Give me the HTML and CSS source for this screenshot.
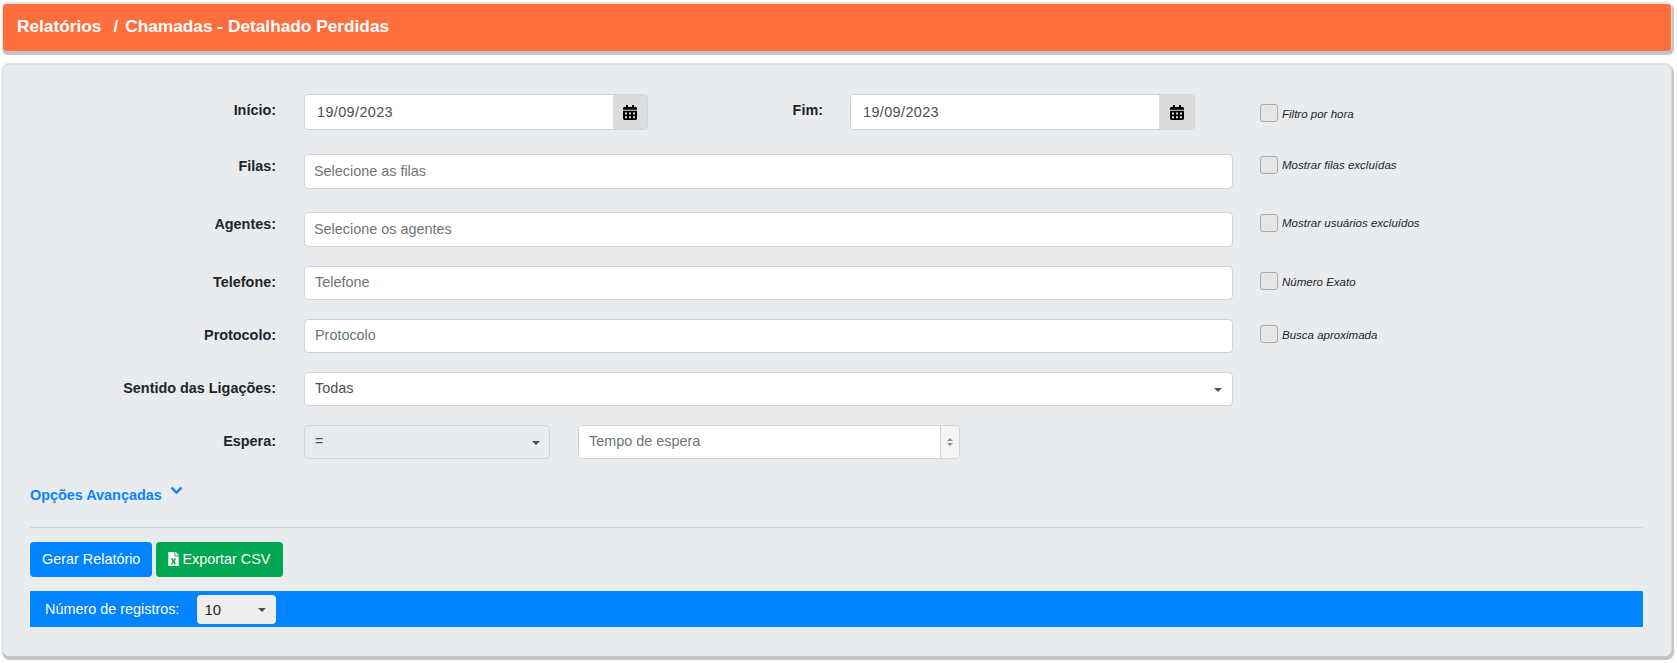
FILE: index.html
```html
<!DOCTYPE html>
<html lang="pt-BR">
<head>
<meta charset="utf-8">
<title>Chamadas - Detalhado Perdidas</title>
<link rel="stylesheet" href="styles.css">
</head>
<body>
<header class="page-header">
  <span class="crumb">Relatórios</span>
  <span class="crumb-sep">/</span>
  <span class="crumb">Chamadas - Detalhado Perdidas</span>
</header>
<main class="panel">
  <form class="filters">
    <div class="row row-dates">
      <label class="row-label label-date">Início:</label>
      <div class="row-main">
        <div class="date-group date-start">
          <input class="field date-input" type="text" value="19/09/2023">
          <span class="date-addon"><svg class="icon-cal" viewBox="0 0 448 512" preserveAspectRatio="none"><path d="M0 464c0 26.5 21.5 48 48 48h352c26.5 0 48-21.5 48-48V192H0v272zm320-196c0-6.6 5.4-12 12-12h40c6.6 0 12 5.4 12 12v40c0 6.6-5.4 12-12 12h-40c-6.6 0-12-5.4-12-12v-40zm0 128c0-6.6 5.4-12 12-12h40c6.6 0 12 5.4 12 12v40c0 6.6-5.4 12-12 12h-40c-6.6 0-12-5.4-12-12v-40zM192 268c0-6.6 5.4-12 12-12h40c6.6 0 12 5.4 12 12v40c0 6.6-5.4 12-12 12h-40c-6.6 0-12-5.4-12-12v-40zm0 128c0-6.6 5.4-12 12-12h40c6.6 0 12 5.4 12 12v40c0 6.6-5.4 12-12 12h-40c-6.6 0-12-5.4-12-12v-40zM64 268c0-6.6 5.4-12 12-12h40c6.6 0 12 5.4 12 12v40c0 6.6-5.4 12-12 12H76c-6.6 0-12-5.4-12-12v-40zm0 128c0-6.6 5.4-12 12-12h40c6.6 0 12 5.4 12 12v40c0 6.6-5.4 12-12 12H76c-6.6 0-12-5.4-12-12v-40zM400 64h-48V16c0-8.8-7.2-16-16-16h-32c-8.8 0-16 7.2-16 16v48H160V16c0-8.8-7.2-16-16-16h-32c-8.8 0-16 7.2-16 16v48H48C21.5 64 0 85.5 0 112v48h448v-48c0-26.5-21.5-48-48-48z"/></svg></span>
        </div>
        <label class="row-label label-date label-end">Fim:</label>
        <div class="date-group date-end">
          <input class="field date-input" type="text" value="19/09/2023">
          <span class="date-addon"><svg class="icon-cal" viewBox="0 0 448 512" preserveAspectRatio="none"><path d="M0 464c0 26.5 21.5 48 48 48h352c26.5 0 48-21.5 48-48V192H0v272zm320-196c0-6.6 5.4-12 12-12h40c6.6 0 12 5.4 12 12v40c0 6.6-5.4 12-12 12h-40c-6.6 0-12-5.4-12-12v-40zm0 128c0-6.6 5.4-12 12-12h40c6.6 0 12 5.4 12 12v40c0 6.6-5.4 12-12 12h-40c-6.6 0-12-5.4-12-12v-40zM192 268c0-6.6 5.4-12 12-12h40c6.6 0 12 5.4 12 12v40c0 6.6-5.4 12-12 12h-40c-6.6 0-12-5.4-12-12v-40zm0 128c0-6.6 5.4-12 12-12h40c6.6 0 12 5.4 12 12v40c0 6.6-5.4 12-12 12h-40c-6.6 0-12-5.4-12-12v-40zM64 268c0-6.6 5.4-12 12-12h40c6.6 0 12 5.4 12 12v40c0 6.6-5.4 12-12 12H76c-6.6 0-12-5.4-12-12v-40zm0 128c0-6.6 5.4-12 12-12h40c6.6 0 12 5.4 12 12v40c0 6.6-5.4 12-12 12H76c-6.6 0-12-5.4-12-12v-40zM400 64h-48V16c0-8.8-7.2-16-16-16h-32c-8.8 0-16 7.2-16 16v48H160V16c0-8.8-7.2-16-16-16h-32c-8.8 0-16 7.2-16 16v48H48C21.5 64 0 85.5 0 112v48h448v-48c0-26.5-21.5-48-48-48z"/></svg></span>
        </div>
      </div>
      <label class="check check-hora"><input type="checkbox"><span>Filtro por hora</span></label>
    </div>
    <div class="row row-filas">
      <label class="row-label label-up">Filas:</label>
      <div class="row-main"><input class="field field-tall" type="text" placeholder="Selecione as filas"></div>
      <label class="check check-up"><input type="checkbox"><span>Mostrar filas excluídas</span></label>
    </div>
    <div class="row row-agentes">
      <label class="row-label label-up">Agentes:</label>
      <div class="row-main"><input class="field field-tall" type="text" placeholder="Selecione os agentes"></div>
      <label class="check check-up"><input type="checkbox"><span>Mostrar usuários excluídos</span></label>
    </div>
    <div class="row">
      <label class="row-label">Telefone:</label>
      <div class="row-main"><input class="field" type="text" placeholder="Telefone"></div>
      <label class="check check-mid"><input type="checkbox"><span>Número Exato</span></label>
    </div>
    <div class="row">
      <label class="row-label">Protocolo:</label>
      <div class="row-main"><input class="field" type="text" placeholder="Protocolo"></div>
      <label class="check check-mid"><input type="checkbox"><span>Busca aproximada</span></label>
    </div>
    <div class="row">
      <label class="row-label">Sentido das Ligações:</label>
      <div class="row-main">
        <div class="select-box select-full">Todas</div>
      </div>
    </div>
    <div class="row">
      <label class="row-label">Espera:</label>
      <div class="row-main row-wait">
        <div class="select-box select-op">=</div>
        <div class="number-group">
          <input class="field number-input" type="text" placeholder="Tempo de espera">
          <span class="spinner"><i class="up"></i><i class="down"></i></span>
        </div>
      </div>
    </div>
  </form>
  <a class="advanced" href="#">Opções Avançadas
    <svg class="icon-chevron" viewBox="0 0 448 512"><path d="M207.029 381.476L12.686 187.132c-9.373-9.373-9.373-24.569 0-33.941l22.667-22.667c9.357-9.357 24.522-9.375 33.901-.04L224 284.505l154.745-154.021c9.379-9.335 24.544-9.317 33.901.04l22.667 22.667c9.373 9.373 9.373 24.569 0 33.941L240.971 381.476c-9.373 9.372-24.569 9.372-33.942 0z"/></svg>
  </a>
  <hr class="divider">
  <div class="actions">
    <button class="btn btn-blue" type="button">Gerar Relatório</button>
    <button class="btn btn-green" type="button"><svg class="icon-file" viewBox="0 0 384 512"><path d="M224 136V0H24C10.7 0 0 10.7 0 24v464c0 13.3 10.7 24 24 24h336c13.3 0 24-10.7 24-24V160H248c-13.2 0-24-10.8-24-24zm60.1 106.5L224 336l60.1 93.5c5.1 8-.6 18.5-10.1 18.5h-34.9c-4.4 0-8.5-2.4-10.6-6.3C208.9 405.5 192 373 192 373c-6.4 14.8-10 20-36.6 68.8-2.1 3.9-6.1 6.3-10.5 6.3H110c-9.5 0-15.2-10.5-10.1-18.5l60.3-93.5-60.3-93.5c-5.2-8 .6-18.5 10.1-18.5h34.8c4.4 0 8.5 2.4 10.6 6.3 26.1 48.8 20 33.6 36.6 68.5 0 0 6.1-11.7 36.6-68.5 2.1-3.9 6.2-6.3 10.6-6.3H274c9.5-.1 15.2 10.4 10.1 18.4zM384 121.9v6.1H256V0h6.1c6.4 0 12.5 2.5 17 7l97.9 98c4.5 4.5 7 10.6 7 16.9z"/></svg>Exportar CSV</button>
  </div>
  <div class="records-bar">
    <span class="records-label">Número de registros:</span>
    <div class="select-box select-records">10</div>
  </div>
</main>
</body>
</html>
```
FILE: styles.css
```css
* { box-sizing: border-box; }
html, body { height: 100%; }
body {
  margin: 0;
  padding: 4px 6px 0 3px;
  background: #fff;
  color: #212529;
  font-family: "Liberation Sans", Arial, sans-serif;
  font-size: 14.4px;
  overflow: hidden;
}
.page-header {
  height: 47px;
  display: flex;
  align-items: center;
  padding: 0 14px 3px;
  background: #ff6f3e;
  color: #fff;
  font-size: 17.28px;
  font-weight: 700;
  border-radius: 4px;
  box-shadow: 0 -1px 1px 1px #e2e2e2, 1px 2px 1px 2px #c2c2c2;
}
.crumb-sep { margin: 0 7px 0 12px; }
.panel {
  margin-top: 14px;
  height: 591px;
  padding: 29px 28px 0 27px;
  background: #e9ecef;
  border-radius: 6px;
  box-shadow: 0 -1px 1px 1px #dedede, 1px 2px 1px 2px #c2c2c2;
}
.filters { display: flex; flex-direction: column; gap: 19px; }
.row { display: flex; align-items: center; height: 34px; }
.row-dates { height: 36px; margin-bottom: 5px; }
.row-filas { height: 35px; margin-bottom: 4px; }
.row-agentes { height: 35px; }
.row-label {
  flex: none;
  width: 246px;
  margin-right: 28px;
  text-align: right;
  font-size: 14.4px;
  font-weight: 700;
  position: relative;
  top: -1px;
}
.label-date { top: -2px; }
.label-up { top: -6px; }
.label-end { width: 175px; margin-right: 27px; }
.row-main { flex: none; width: 929px; display: flex; align-items: center; height: 100%; }
.row-wait { gap: 28px; }
.field {
  width: 100%;
  height: 34px;
  padding: 0 10px 2px;
  background: #fff;
  border: 1px solid #ced4da;
  border-radius: 4px;
  font: 14.4px "Liberation Sans", Arial, sans-serif;
  color: #495057;
  outline: none;
}
.field::placeholder { color: #6c757d; opacity: 1; }
.field-tall { height: 35px; padding: 0 9px 2px; }
.date-group {
  flex: none;
  display: flex;
  height: 36px;
  border: 1px solid #ced4da;
  border-radius: 4px;
  overflow: hidden;
  background: #fff;
}
.date-start { width: 344px; }
.date-end { width: 345px; }
.date-end .date-addon { width: 35px; }
.date-input {
  flex: 1;
  min-width: 0;
  height: 100%;
  border: 0;
  border-radius: 0;
  padding: 0 12px;
  letter-spacing: 0.4px;
}
.date-addon {
  flex: none;
  width: 34px;
  background: #dcdcdc;
  display: flex;
  align-items: center;
  justify-content: center;
}
.icon-cal { width: 14px; height: 15px; fill: #000; }
.check {
  flex: none;
  display: flex;
  align-items: center;
  gap: 4px;
  margin-left: 27px;
  font-size: 11.52px;
  font-style: italic;
  color: #212529;
}
.check input {
  appearance: none;
  margin: 0;
  width: 18px;
  height: 18px;
  background: #e6e6e6;
  border: 1px solid #aaa;
  border-radius: 3px;
}
.check-hora { position: relative; top: 1px; }
.check-up { position: relative; top: -7px; }
.check-mid { position: relative; top: -2px; }
.check-hora span, .check-mid span { padding-top: 2px; }
.select-box {
  position: relative;
  height: 34px;
  display: flex;
  align-items: center;
  padding: 0 10px 2px;
  background: #fff;
  border: 1px solid #ced4da;
  border-radius: 4px;
  color: #495057;
}
.select-box::after {
  content: "";
  position: absolute;
  top: 50%;
  right: 10px;
  margin-top: -1px;
  border: 4px solid transparent;
  border-top-color: #495057;
  border-bottom: 0;
}
.select-full { width: 100%; }
.select-op { flex: none; width: 246px; background: #e9ecef; }
.select-op::after { right: 9px; }
.number-group {
  flex: none;
  display: flex;
  width: 382px;
  height: 34px;
  border: 1px solid #ced4da;
  border-radius: 4px;
  overflow: hidden;
  background: #fff;
}
.number-input { flex: 1; min-width: 0; height: 100%; border: 0; border-radius: 0; }
.spinner {
  flex: none;
  width: 19px;
  border-left: 1px solid #ced4da;
  background: #f5f5f5;
  display: flex;
  flex-direction: column;
  align-items: center;
  justify-content: center;
  gap: 2px;
}
.spinner i { display: block; border: 3px solid transparent; }
.spinner .up { border-bottom-color: #8a8f94; border-top: 0; }
.spinner .down { border-top-color: #8a8f94; border-bottom: 0; }
.advanced {
  display: flex;
  align-items: center;
  margin-top: 26px;
  height: 20px;
  color: #0a84ff;
  font-size: 14.4px;
  font-weight: 700;
  text-decoration: none;
}
.icon-chevron {
  width: 11px;
  height: 13px;
  margin: -9px 0 0 9px;
  fill: #0a84ff;
  stroke: #0a84ff;
  stroke-width: 30;
}
.divider { margin: 22px 0 14px; border: 0; border-top: 1px solid #ced4da; }
.actions { display: flex; gap: 4px; }
.btn {
  height: 35px;
  padding: 0 12px 2px;
  border: 0;
  border-radius: 4px;
  color: #fff;
  font: 14.4px "Liberation Sans", Arial, sans-serif;
  display: flex;
  align-items: center;
}
.btn-blue { background: #0084ff; }
.btn-green { background: #00a651; padding-right: 13px; }
.icon-file { width: 11px; height: 14px; margin-right: 3px; fill: #fff; }
.records-bar {
  margin-top: 14px;
  height: 36px;
  display: flex;
  align-items: center;
  padding-left: 15px;
  background: #0084ff;
  border-radius: 1px;
  color: #fff;
}
.records-label { margin-right: 18px; }
.select-records {
  width: 79px;
  height: 29px;
  padding: 0 7px;
  background: #eee;
  border: 0;
  border-radius: 4px;
  color: #212529;
  font-size: 15px;
}
```
